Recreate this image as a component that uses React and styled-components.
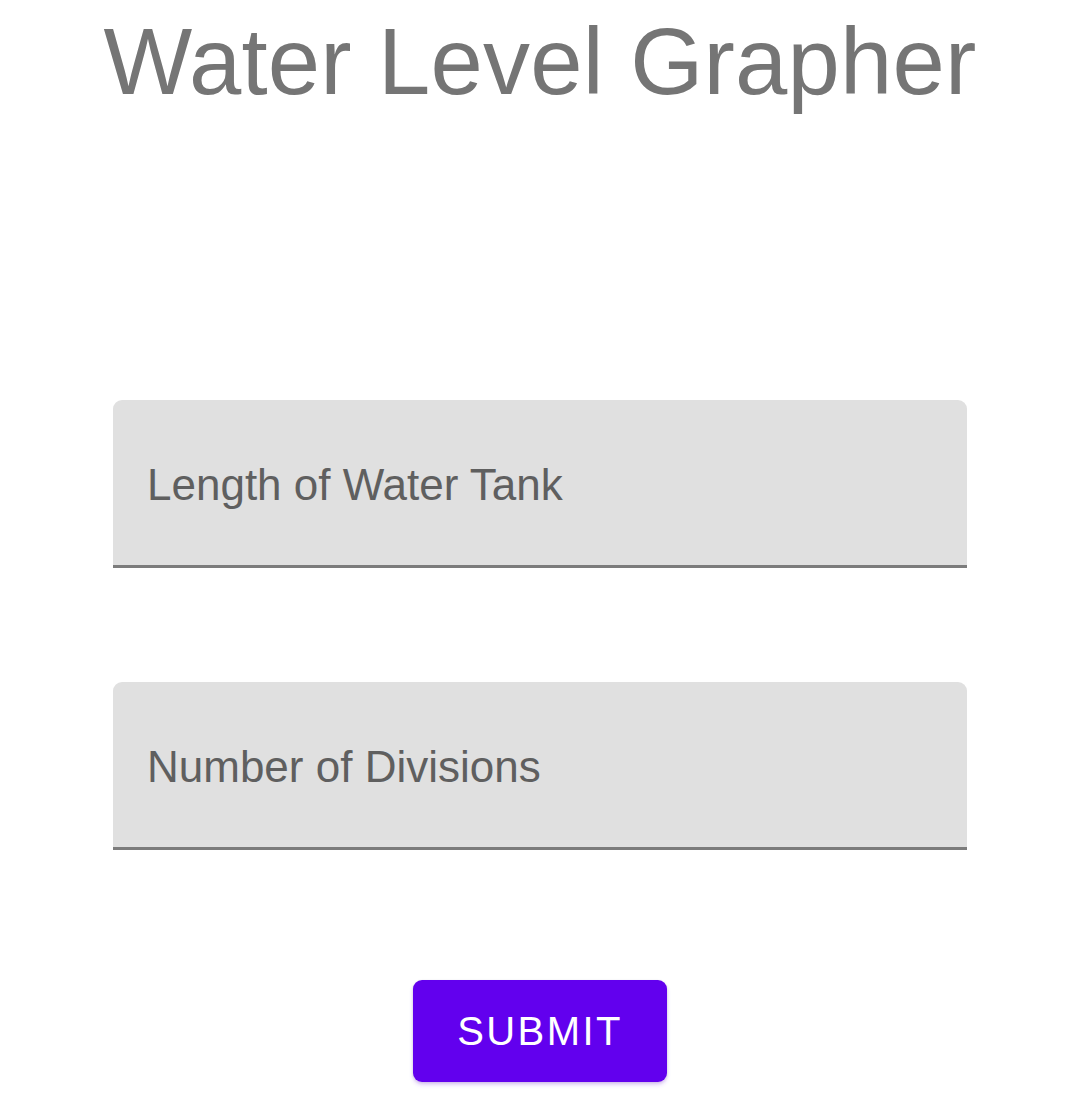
import React from "react";
import styled, { createGlobalStyle } from "styled-components";

const Global = createGlobalStyle`
  html, body { margin: 0; padding: 0; background: #ffffff; }
  body { font-family: "Liberation Sans", Arial, sans-serif; }
  * { box-sizing: border-box; }
`;

const Page = styled.main`
  width: 1080px;
  min-height: 1120px;
  display: flex;
  flex-direction: column;
  align-items: center;
`;

const Title = styled.h1`
  margin: 7px 0 0;
  font-family: "Liberation Sans", Arial, sans-serif;
  font-weight: 400;
  font-size: 94px;
  line-height: 110px;
  color: #757575;
  letter-spacing: 0.2px;
  text-align: center;
`;

const Form = styled.form`
  width: 854px;
  margin-top: 283px;
  display: flex;
  flex-direction: column;
  align-items: center;
  gap: 114px;
`;

const Field = styled.label`
  width: 100%;
  height: 168px;
  display: flex;
  align-items: center;
  padding: 4px 34px 0;
  background: #e0e0e0;
  border-radius: 9px 9px 0 0;
  border-bottom: 3px solid #7c7c7c;
`;

const Input = styled.input`
  width: 100%;
  border: none;
  outline: none;
  background: transparent;
  font-family: "Liberation Sans", Arial, sans-serif;
  font-size: 44px;
  color: #5f5f5f;
  padding: 0;
  &::placeholder { color: #5f5f5f; opacity: 1; }
`;

const Button = styled.button`
  margin-top: 16px;
  width: 254px;
  height: 102px;
  border: none;
  border-radius: 9px;
  background: #6200ee;
  color: #ffffff;
  font-family: "Liberation Sans", Arial, sans-serif;
  font-size: 40px;
  letter-spacing: 2.4px;
  text-transform: uppercase;
  box-shadow: 0 3px 4px rgba(98, 0, 238, 0.18), 0 1px 3px rgba(0, 0, 0, 0.12);
  cursor: pointer;
`;

export default function App() {
  return (
    <Page>
      <Global />
      <Title>Water Level Grapher</Title>
      <Form onSubmit={(e) => e.preventDefault()}>
        <Field>
          <Input placeholder="Length of Water Tank" />
        </Field>
        <Field>
          <Input placeholder="Number of Divisions" />
        </Field>
        <Button type="submit">Submit</Button>
      </Form>
    </Page>
  );
}
